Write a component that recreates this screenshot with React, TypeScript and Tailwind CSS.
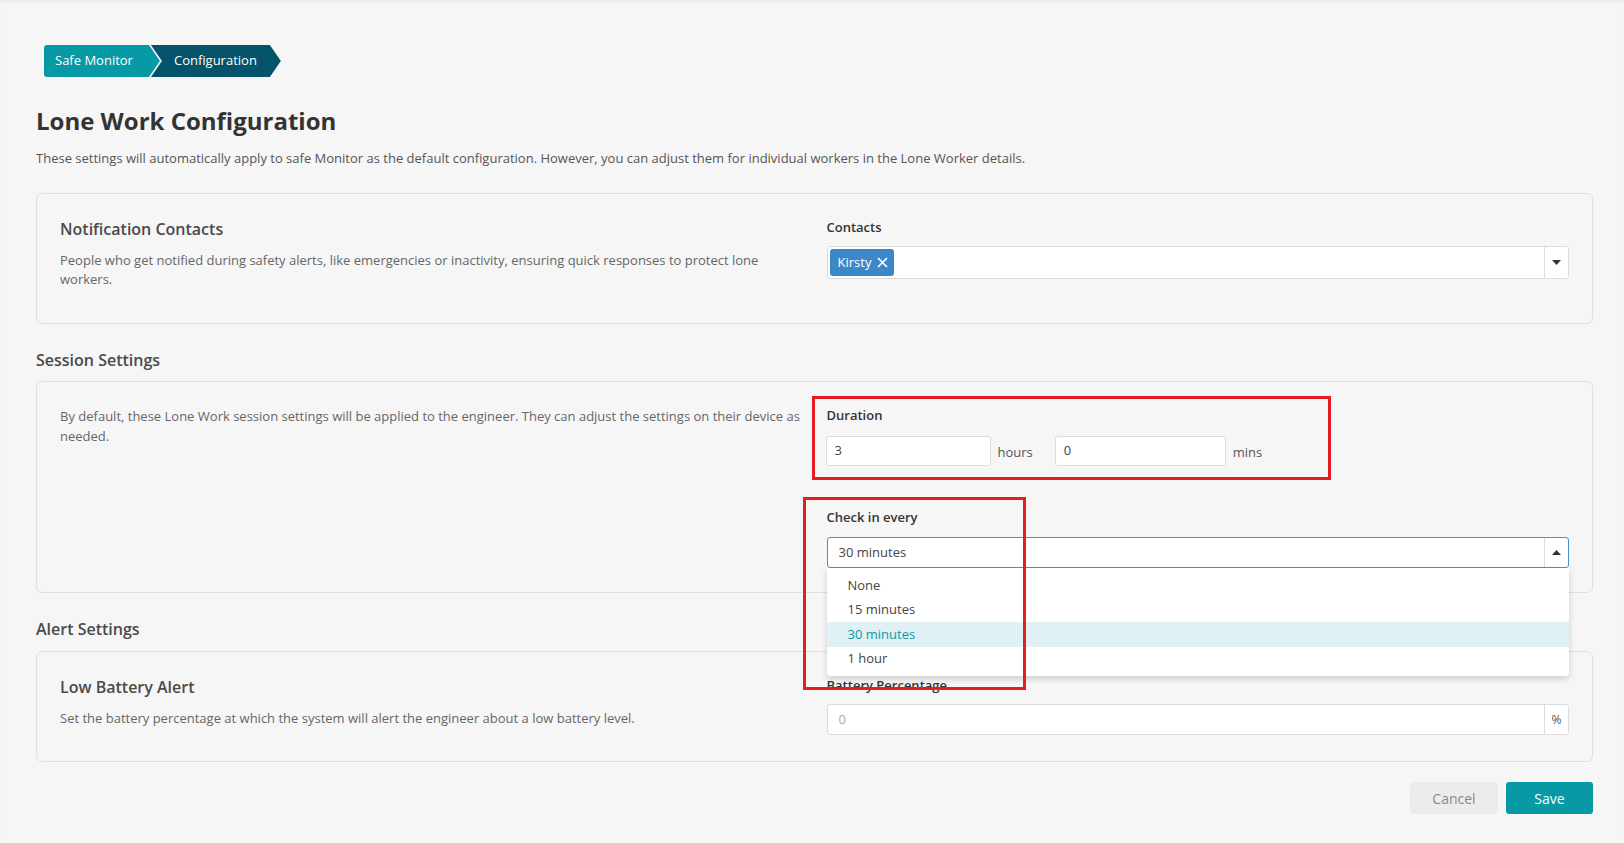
import React from 'react';

const checkInOptions = ['None', '15 minutes', '30 minutes', '1 hour'];

const Caret: React.FC<{ up?: boolean }> = ({ up }) => (
  <svg width="9" height="5" viewBox="0 0 9 5" className="block">
    {up ? <polygon points="0,5 4.5,0 9,5" fill="#333" /> : <polygon points="0,0 9,0 4.5,5" fill="#333" />}
  </svg>
);

const Card: React.FC<{ children: React.ReactNode; className?: string }> = ({ children, className }) => (
  <div className={`rounded-md border border-[#e0e0e0] bg-[#f6f6f6] px-[23px] ${className ?? ''}`}>
    <div className="grid grid-cols-2 gap-6">{children}</div>
  </div>
);

const App: React.FC = () => {
  return (
    <div className="min-h-screen bg-[#f6f6f6] font-['Open_Sans',sans-serif] text-[#333] border-t border-[#ebebeb] shadow-[inset_0_2px_3px_rgba(0,0,0,0.03)]">
      <div className="pl-[36px] pr-[31px] pt-[44px] pb-6">
        {/* breadcrumb */}
        <nav className="ml-[8px] flex h-8 items-stretch text-[13px] text-white">
          <div className="flex items-center rounded-l-[3px] bg-[#0799a6] pl-[11px] pr-[27px] [clip-path:polygon(0_0,calc(100%_-_11px)_0,100%_50%,calc(100%_-_11px)_100%,0_100%)]">
            Safe Monitor
          </div>
          <div className="-ml-[9px] flex items-center bg-[#03536a] pl-[23px] pr-[24px] [clip-path:polygon(0_0,calc(100%_-_11px)_0,100%_50%,calc(100%_-_11px)_100%,0_100%,11px_50%)]">
            Configuration
          </div>
        </nav>

        <h1 className="mt-7 text-[24px] font-bold leading-8 text-[#333]">Lone Work Configuration</h1>
        <p className="mt-[11px] text-[13px] leading-5 text-[#555]">
          These settings will automatically apply to safe Monitor as the default configuration. However, you can adjust them for individual workers in the Lone Worker details.
        </p>

        {/* Notification contacts */}
        <Card className="mt-[25px] pt-6 pb-[34px]">
          <div>
            <h3 className="text-[16px] font-semibold leading-[22px] text-[#4a4a4a]">Notification Contacts</h3>
            <p className="mt-[11px] text-[13px] leading-[19px] text-[#666]">
              People who get notified during safety alerts, like emergencies or inactivity, ensuring quick responses to protect lone workers.
            </p>
          </div>
          <div>
            <label className="block text-[13px] font-semibold leading-[18px] text-[#333]">Contacts</label>
            <div className="mt-[10px] flex h-[33px] rounded-[3px] border border-[#dcdcdc] bg-white">
              <div className="flex flex-1 items-center pl-[2px]">
                <span className="flex h-[27px] items-center gap-[6px] rounded-[3px] bg-[#3c87c8] pl-[8px] pr-[6px] text-[13px] text-white">
                  Kirsty
                  <svg width="11" height="11" viewBox="0 0 11 11">
                    <path d="M1 1 L10 10 M10 1 L1 10" stroke="white" strokeWidth="1.7" />
                  </svg>
                </span>
              </div>
              <div className="flex w-6 items-center justify-center border-l border-[#dcdcdc]">
                <Caret />
              </div>
            </div>
          </div>
        </Card>

        {/* Session settings */}
        <h2 className="mt-[25px] text-[16px] font-semibold leading-[22px] text-[#4a4a4a]">Session Settings</h2>
        <Card className="mt-[10px] pt-6 pb-[24px]">
          <p className="text-[13px] leading-5 text-[#666]">
            By default, these Lone Work session settings will be applied to the engineer. They can adjust the settings on their device as needed.
          </p>
          <div>
            <div className="relative">
              <label className="block text-[13px] font-semibold leading-[18px] text-[#333]">Duration</label>
              <div className="mt-[12px] flex items-center text-[13px] text-[#555]">
                <div className="-ml-px flex h-[30px] w-[165px] items-center rounded-[3px] border border-[#dcdcdc] bg-white px-2 text-[#444]">3</div>
                <span className="ml-[7px] mt-[3px]">hours</span>
                <div className="ml-[22px] flex h-[30px] w-[171px] items-center rounded-[3px] border border-[#dcdcdc] bg-white px-2 text-[#444]">0</div>
                <span className="ml-[7px] mt-[3px]">mins</span>
              </div>
              <div className="pointer-events-none absolute -left-[15px] -top-[10px] z-20 h-[84px] w-[519px] border-[3px] border-[#e3201f]" />
            </div>

            <div className="relative mt-[42px]">
              <label className="block text-[13px] font-semibold leading-[18px] text-[#333]">Check in every</label>
              <div className="relative mt-[11px]">
                <div className="flex h-[31px] rounded-[3px] border border-[#4a8fd2] bg-white">
                  <div className="flex flex-1 items-center pl-[11px] text-[13px] text-[#444]">30 minutes</div>
                  <div className="flex w-6 items-center justify-center border-l border-[#dcdcdc]">
                    <Caret up />
                  </div>
                </div>
                <ul className="absolute left-0 right-0 top-[31px] z-10 rounded-b-[3px] bg-white pt-[5px] pb-[5px] text-[13px] shadow-[0_3px_6px_rgba(0,0,0,0.16)]">
                  {checkInOptions.map(o => (
                    <li
                      key={o}
                      className={`flex h-[24.5px] items-center pl-[21px] ${o === '30 minutes' ? 'bg-[#dff1f4] text-[#0a9aa6]' : 'text-[#444]'}`}
                    >
                      {o}
                    </li>
                  ))}
                </ul>
              </div>
              <div className="pointer-events-none absolute -left-[24px] -top-[11px] z-20 h-[193px] w-[223px] border-[3px] border-[#e3201f]" />
            </div>
          </div>
        </Card>

        {/* Alert settings */}
        <h2 className="mt-[25px] text-[16px] font-semibold leading-[22px] text-[#4a4a4a]">Alert Settings</h2>
        <Card className="mt-[11px] pt-6 pb-[26px]">
          <div>
            <h3 className="text-[16px] font-semibold leading-[22px] text-[#4a4a4a]">Low Battery Alert</h3>
            <p className="mt-[10px] text-[13px] leading-5 text-[#666]">
              Set the battery percentage at which the system will alert the engineer about a low battery level.
            </p>
          </div>
          <div>
            <label className="block text-[13px] font-semibold leading-[18px] text-[#333]">Battery Percentage</label>
            <div className="mt-[10px] flex h-[31px] rounded-[3px] border border-[#dcdcdc] bg-white">
              <div className="flex flex-1 items-center pl-[11px] text-[13px] text-[#aaa]">0</div>
              <div className="flex w-6 items-center justify-center border-l border-[#dcdcdc] text-[12px] text-[#555]">%</div>
            </div>
          </div>
        </Card>

        <div className="mt-5 flex justify-end gap-2">
          <button className="h-8 w-[88px] rounded-[3px] bg-[#ececec] text-[14px] text-[#888]">Cancel</button>
          <button className="h-8 w-[87px] rounded-[3px] bg-[#0799a6] text-[14px] text-white">Save</button>
        </div>
      </div>
    </div>
  );
};

export default App;
